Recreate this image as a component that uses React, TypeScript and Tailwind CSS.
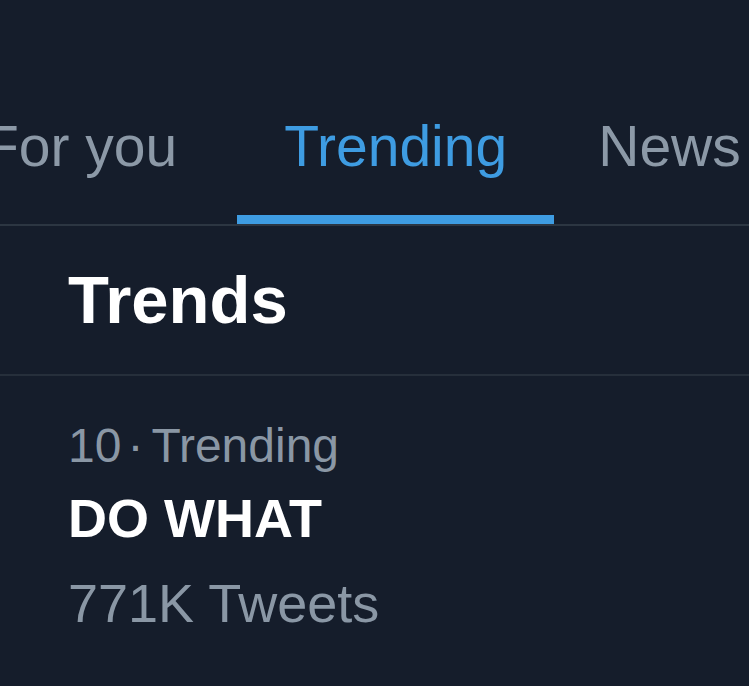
import React from 'react';

const tabs = [
  { label: 'For you', active: false, cls: 'ml-[-16px]' },
  { label: 'Trending', active: true, cls: 'ml-[60px] w-[317px]' },
  { label: 'News', active: false, cls: 'ml-[44px]' },
];

const App: React.FC = () => {
  return (
    <div
      className="w-[749px] h-[686px] overflow-hidden bg-[#151d2b] text-white"
      style={{ fontFamily: '"Liberation Sans", Arial, sans-serif' }}
    >
      {/* Tabs */}
      <div className="h-[226px] border-b-2 border-[#2c3642] flex items-end">
        {tabs.map((t) => (
          <div key={t.label} className={`flex flex-col items-center shrink-0 ${t.cls}`}>
            <span
              className={`text-[57px] leading-none whitespace-nowrap ${
                t.active ? 'text-[#3e9ce2]' : 'text-[#8c99a7]'
              }`}
            >
              {t.label}
            </span>
            <div className={`mt-[40px] h-[9px] w-full ${t.active ? 'bg-[#3e9ce2]' : 'bg-transparent'}`} />
          </div>
        ))}
      </div>

      {/* Header */}
      <div className="pl-[68px] pt-[40px] pb-[41px] border-b-2 border-[#262f3b]">
        <h2 className="text-[67px] font-bold leading-none">Trends</h2>
      </div>

      {/* Trend item */}
      <div className="pl-[68px] pt-[46px] flex flex-col">
        <div className="flex items-baseline text-[48px] leading-none text-[#8a97a5]">
          <span>10</span>
          <span className="ml-[6px]">·</span>
          <span className="ml-[8px]">Trending</span>
        </div>
        <span className="mt-[21px] text-[54px] leading-none font-bold text-white">DO WHAT</span>
        <span className="mt-[31px] text-[54px] leading-none text-[#8a97a5]">771K Tweets</span>
      </div>
    </div>
  );
};

export default App;
